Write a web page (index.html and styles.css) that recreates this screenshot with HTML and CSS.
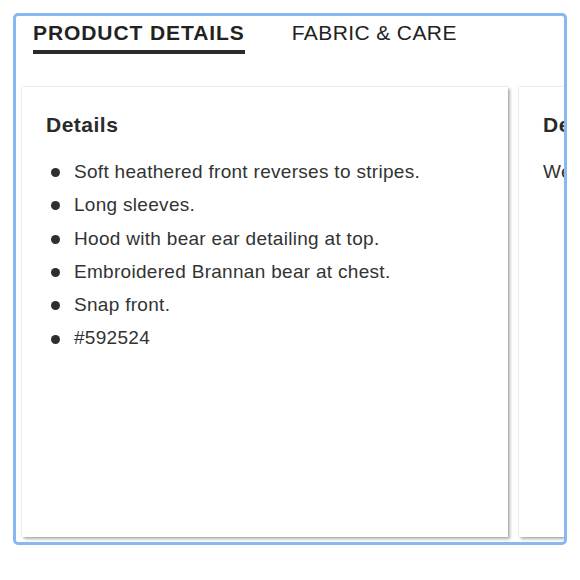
FILE: index.html
```html
<!DOCTYPE html>
<html>
<head>
<meta charset="utf-8">
<link rel="stylesheet" href="styles.css">
</head>
<body>
<div class="frame">
  <div class="tabs">
    <div class="tab active">PRODUCT DETAILS</div>
    <div class="tab">FABRIC &amp; CARE</div>
  </div>
  <div class="cards">
    <div class="card">
      <h2 class="card-title">Details</h2>
      <ul class="list">
        <li>Soft heathered front reverses to stripes.</li>
        <li>Long sleeves.</li>
        <li>Hood with bear ear detailing at top.</li>
        <li>Embroidered Brannan bear at chest.</li>
        <li>Snap front.</li>
        <li>#592524</li>
      </ul>
    </div>
    <div class="card">
      <h2 class="card-title">Description</h2>
      <p class="text">We think you'll love this cozy hoodie.</p>
    </div>
  </div>
</div>
</body>
</html>
```

FILE: styles.css
```css
html, body {
  margin: 0;
  padding: 0;
  background: #ffffff;
}
body {
  font-family: "Liberation Sans", Arial, sans-serif;
  color: #333333;
}
.frame {
  margin: 13px 0 0 13px;
  width: 548px;
  height: 526px;
  border: 3px solid #88b8ef;
  border-radius: 5px;
  overflow: hidden;
  display: flex;
  flex-direction: column;
}
.tabs {
  display: flex;
  gap: 47px;
  padding: 5px 0 0 17px;
  flex: none;
}
.tab {
  font-size: 21px;
  line-height: 24px;
  color: #222222;
  letter-spacing: 0.4px;
  padding-bottom: 5px;
  border-bottom: 4px solid transparent;
  white-space: nowrap;
}
.tab.active {
  font-weight: bold;
  letter-spacing: 0.92px;
  border-bottom-color: #2b2b2b;
}
.cards {
  display: flex;
  gap: 11px;
  padding: 33px 0 0 6px;
  flex: none;
}
.card {
  flex: none;
  width: 486px;
  height: 450px;
  box-sizing: border-box;
  background: #ffffff;
  padding: 26px 24px 0 24px;
  box-shadow: 0 0 2px rgba(0, 0, 0, 0.18), 2px 2px 3px rgba(0, 0, 0, 0.3);
}
.card-title {
  margin: 0;
  font-size: 21px;
  line-height: 24px;
  font-weight: bold;
  letter-spacing: 0.5px;
  color: #2a2a2a;
  white-space: nowrap;
}
.list {
  list-style: none;
  margin: 18px 0 0 0;
  padding: 0 0 0 5px;
}
.list li {
  display: flex;
  align-items: center;
  gap: 14px;
  font-size: 19px;
  line-height: 33.3px;
  letter-spacing: 0.3px;
  color: #333333;
  white-space: nowrap;
}
.list li::before {
  content: "";
  flex: none;
  width: 9px;
  height: 9px;
  margin-top: 2px;
  border-radius: 50%;
  background: #2e2e2e;
}
.text {
  margin: 18px 0 0 0;
  font-size: 19px;
  line-height: 33.3px;
  letter-spacing: 0.3px;
  color: #333333;
  white-space: nowrap;
}
```
